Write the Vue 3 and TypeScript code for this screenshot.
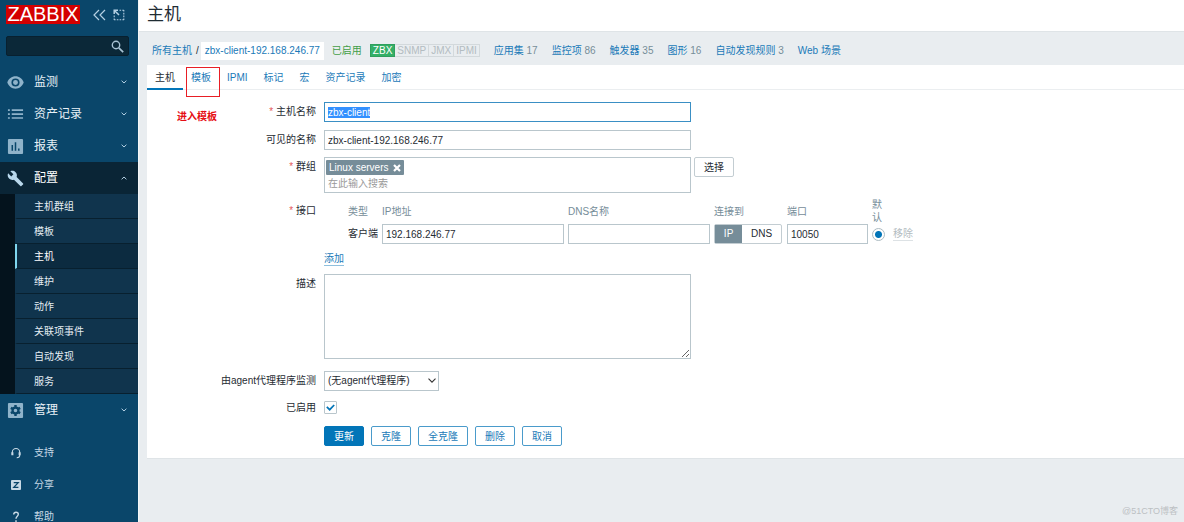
<script setup lang="ts">
import { onMounted, ref } from 'vue'

interface MenuItem {
  label: string
  icon: string
  open?: boolean
}

const topMenu: MenuItem[] = [
  { label: '监测', icon: 'eye' },
  { label: '资产记录', icon: 'list' },
  { label: '报表', icon: 'chart' },
  { label: '配置', icon: 'wrench', open: true },
  { label: '管理', icon: 'gear' },
]
const subMenu: string[] = ['主机群组', '模板', '主机', '维护', '动作', '关联项事件', '自动发现', '服务']
const footerMenu: MenuItem[] = [
  { label: '支持', icon: 'support' },
  { label: '分享', icon: 'share' },
  { label: '帮助', icon: 'help' },
]
const counters: { label: string; count?: number }[] = [
  { label: '应用集', count: 17 },
  { label: '监控项', count: 86 },
  { label: '触发器', count: 35 },
  { label: '图形', count: 16 },
  { label: '自动发现规则', count: 3 },
  { label: 'Web 场景' },
]
const tabs: string[] = ['主机', '模板', 'IPMI', '标记', '宏', '资产记录', '加密']
const actions: string[] = ['克隆', '全克隆', '删除', '取消']

const hostName = ref('zbx-client')
const visibleName = ref('zbx-client-192.168.246.77')
const groupSearch = ref('')
const ip = ref('192.168.246.77')
const dns = ref('')
const port = ref('10050')
const connectTo = ref('ip')
const isDefault = ref('1')
const description = ref('')
const enabled = ref(true)
const hostInput = ref<HTMLInputElement | null>(null)

onMounted(() => {
  hostInput.value?.focus()
  hostInput.value?.select()
})
</script>

<template>
  <div class="page">
    <aside class="sidebar">
      <div class="brand">
        <a class="logo" href="#">ZABBIX</a>
        <button class="icon-button" type="button" aria-label="收起">
          <svg width="13" height="12" viewBox="0 0 13 12" fill="none" stroke="#b4d0e3" stroke-width="1.2">
            <path d="M6 1 1 6l5 5M12 1 7 6l5 5" />
          </svg>
        </button>
        <button class="icon-button" type="button" aria-label="隐藏">
          <svg width="12" height="12" viewBox="0 0 12 12" fill="none" stroke="#b4d0e3" stroke-width="1.1">
            <path d="M6.5 1.2H11M10.8 1v10M11 10.8H1M1.2 11V6.5" stroke-dasharray="1.6 1.2" />
            <path d="M1.200 5V1.200H5M1.200 1.200l4.800 4.800" stroke-width="1.500" />
          </svg>
        </button>
      </div>
      <form class="search" @submit.prevent>
        <input type="text" aria-label="搜索" />
        <button class="icon-button" type="submit" aria-label="搜索">
          <svg width="13" height="13" viewBox="0 0 13 13" fill="none" stroke="#a9c3d4">
            <circle cx="5" cy="5" r="3.7" stroke-width="1.4" />
            <path d="m7.8 7.8 4.4 4.4" stroke-width="1.7" />
          </svg>
        </button>
      </form>

      <nav class="menu">
        <template v-for="item in topMenu" :key="item.label">
          <a class="menu-item" :class="{ open: item.open }" href="#">
            <svg v-if="item.icon === 'eye'" class="menu-icon" viewBox="0 0 18 18">
              <path fill="currentColor" fill-rule="evenodd" d="M9 2.5C5 2.5 1.8 5 .3 9 1.8 13 5 15.500 9 15.500S16.200 13 17.700 9C16.200 5 13 2.500 9 2.500zM9 4.700a4.300 4.300 0 1 1 0 8.600 4.300 4.300 0 0 1 0-8.600z" />
              <circle cx="9" cy="9" r="2.600" fill="currentColor" />
            </svg>
            <svg v-else-if="item.icon === 'list'" class="menu-icon" viewBox="0 0 18 18" fill="currentColor">
              <path d="M1 3.500h2v1.700H1zM5 3.500h12v1.700H5zM1 7.700h2v1.700H1zM5 7.700h12v1.700H5zM1 11.900h2v1.700H1zM5 11.900h12v1.700H5z" />
            </svg>
            <svg v-else-if="item.icon === 'chart'" class="menu-icon" viewBox="0 0 18 18">
              <rect x="1" y="1" width="16" height="16" rx="1" fill="currentColor" />
              <path d="M4.800 7.500h1.600v6H4.800zM8.200 4.500h1.600v9H8.200zM11.700 11.200h1.600v2.300h-1.600z" fill="#0a466a" />
            </svg>
            <svg v-else-if="item.icon === 'wrench'" class="menu-icon" viewBox="0 0 24 24" fill="currentColor">
              <path d="m22.700 19-9.100-9.100c.9-2.300.4-5-1.500-6.900-2-2-5-2.400-7.400-1.300L9 6 6 9 1.600 4.700C.4 7.100.9 10.100 2.900 12.100c1.900 1.900 4.600 2.400 6.900 1.500l9.100 9.100c.4.4 1 .4 1.400 0l2.300-2.300c.5-.4.5-1.100.1-1.400z" />
            </svg>
            <svg v-else class="menu-icon" viewBox="0 0 18 18">
              <rect x="1" y="1" width="16" height="16" rx="1" fill="currentColor" />
              <circle cx="9" cy="9" r="3.100" fill="none" stroke="#0a466a" stroke-width="2.400" />
              <g stroke="#0a466a" stroke-width="2.600">
                <path d="M9 3.300v2M9 12.700v2M4.100 6.200l1.700 1M12.200 10.800l1.700 1M4.100 11.800l1.700-1M12.200 7.200l1.700-1" />
              </g>
            </svg>
            <span>{{ item.label }}</span>
            <svg class="chevron" width="6" height="4" viewBox="0 0 6 4" fill="none" stroke="#b4d0e3">
              <path :d="item.open ? 'M.6 3.300 3 1l2.400 2.300' : 'M.6.700 3 3 5.400.700'" />
            </svg>
          </a>
          <ul v-if="item.open" class="submenu">
            <li v-for="(sub, i) in subMenu" :key="sub">
              <a href="#" :class="{ selected: i === 2 }">{{ sub }}</a>
            </li>
          </ul>
        </template>
      </nav>

      <nav class="footer-menu">
        <a v-for="item in footerMenu" :key="item.label" href="#">
          <svg v-if="item.icon === 'support'" width="12" height="12" viewBox="0 0 12 12" fill="none" stroke="currentColor">
            <path d="M2.300 7.800V5.200a3.700 3.700 0 0 1 7.400 0v3c0 1.600-1 2.500-3 2.500" stroke-width="1.100" />
            <path d="M2.400 5.200v3M9.600 5.200v3" stroke-width="2" />
          </svg>
          <svg v-else-if="item.icon === 'share'" width="12" height="12" viewBox="0 0 12 12">
            <rect x="1" y="1" width="10" height="10" rx="1" fill="currentColor" />
            <path d="M3.700 3.600h4.500L3.800 8.400h4.600" fill="none" stroke="#0a466a" stroke-width="1.300" />
          </svg>
          <svg v-else width="12" height="12" viewBox="0 0 12 12" fill="none" stroke="currentColor" stroke-width="1.400">
            <path d="M3.700 3.600C3.700 2 4.600 1.200 6 1.200s2.300.8 2.300 2.100C8.300 5.200 6 5.200 6 7.700M6 9.300v1.600" />
          </svg>
          <span>{{ item.label }}</span>
        </a>
      </nav>
    </aside>

    <div class="main">
      <header class="title-bar"><h1>主机</h1></header>

      <nav class="crumbs">
        <a href="#">所有主机</a>
        <span class="slash">/</span>
        <a class="current" href="#">zbx-client-192.168.246.77</a>
        <span class="status">已启用</span>
        <span class="badges">
          <span class="badge on">ZBX</span><span class="badge">SNMP</span><span class="badge">JMX</span><span class="badge">IPMI</span>
        </span>
        <span v-for="c in counters" :key="c.label" class="counter">
          <a href="#">{{ c.label }}</a><template v-if="c.count">&nbsp;{{ c.count }}</template>
        </span>
      </nav>

      <main class="card">
        <nav class="tabs">
          <a v-for="(tab, i) in tabs" :key="tab" href="#" :class="{ active: i === 0, marked: i === 1 }">{{ tab }}</a>
        </nav>
        <strong class="note">进入模板</strong>

        <form class="form" @submit.prevent>
          <div class="row">
            <label class="label required" for="host">主机名称</label>
            <input id="host" ref="hostInput" v-model="hostName" class="field wide" type="text" />
          </div>
          <div class="row">
            <label class="label" for="visible">可见的名称</label>
            <input id="visible" v-model="visibleName" class="field wide" type="text" />
          </div>
          <div class="row groups">
            <label class="label required" for="groups">群组</label>
            <div class="multiselect wide">
              <span class="chip">
                Linux servers
                <button type="button" aria-label="移除 Linux servers">
                  <svg width="8" height="8" viewBox="0 0 8 8" stroke="#fff" stroke-width="2.200">
                    <path d="m1 1 6 6M7 1 1 7" />
                  </svg>
                </button>
              </span>
              <input id="groups" v-model="groupSearch" type="text" placeholder="在此输入搜索" />
            </div>
            <button class="button plain" type="button">选择</button>
          </div>
          <div class="row interfaces">
            <span class="label required">接口</span>
            <div>
              <table>
                <colgroup>
                  <col class="c-type" /><col class="c-ip" /><col class="c-dns" /><col class="c-connect" />
                  <col class="c-port" /><col class="c-default" /><col class="c-remove" />
                </colgroup>
                <thead>
                  <tr>
                    <th>类型</th>
                    <th>IP地址</th>
                    <th>DNS名称</th>
                    <th>连接到</th>
                    <th>端口</th>
                    <th>默认</th>
                    <th></th>
                  </tr>
                </thead>
                <tbody>
                  <tr>
                    <td>客户端</td>
                    <td><input v-model="ip" class="field" type="text" aria-label="IP地址" /></td>
                    <td><input v-model="dns" class="field" type="text" aria-label="DNS名称" /></td>
                    <td>
                      <div class="segmented" role="radiogroup" aria-label="连接到">
                        <label><input v-model="connectTo" type="radio" name="connect" value="ip" /><span>IP</span></label>
                        <label><input v-model="connectTo" type="radio" name="connect" value="dns" /><span>DNS</span></label>
                      </div>
                    </td>
                    <td><input v-model="port" class="field" type="text" aria-label="端口" /></td>
                    <td><input v-model="isDefault" class="radio" type="radio" name="default" value="1" aria-label="默认" /></td>
                    <td><button class="link-button" type="button" disabled>移除</button></td>
                  </tr>
                </tbody>
              </table>
              <button class="link-button add" type="button">添加</button>
            </div>
          </div>
          <div class="row">
            <label class="label" for="description">描述</label>
            <textarea id="description" v-model="description" class="wide"></textarea>
          </div>
          <div class="row proxy">
            <label class="label" for="proxy">由agent代理程序监测</label>
            <div class="select">
              <select id="proxy">
                <option>(无agent代理程序)</option>
              </select>
              <svg width="8" height="5" viewBox="0 0 8 5" fill="none" stroke="#333" stroke-width="1.100">
                <path d="m.5.600 3.500 3.500L7.500.600" />
              </svg>
            </div>
          </div>
          <div class="row enabled">
            <label class="label" for="enabled">已启用</label>
            <span class="check">
              <input id="enabled" v-model="enabled" type="checkbox" />
              <svg v-if="enabled" width="9" height="7" viewBox="0 0 9 7" fill="none" stroke="#0275b8" stroke-width="1.700">
                <path d="m.8 2.800 2.900 2.900L8.200 1" />
              </svg>
            </span>
          </div>
          <div class="row buttons">
            <span class="label"></span>
            <button class="button primary" type="submit">更新</button>
            <button v-for="a in actions" :key="a" class="button" type="button">{{ a }}</button>
          </div>
        </form>
      </main>
      <div class="watermark">@51CTO博客</div>
    </div>
  </div>
</template>

<style>
body {
  margin: 0;
  overflow: hidden;
  background: #e9edf0;
}
</style>

<style scoped>
* {
  box-sizing: border-box;
}
.page {
  display: flex;
  height: 100vh;
  font: 10px/14px "Liberation Sans", "Noto Sans CJK SC", sans-serif;
  color: #1f2c33;
}
a {
  color: #1a7ab8;
  text-decoration: none;
}
button,
input,
select,
textarea {
  font: inherit;
  color: inherit;
  margin: 0;
}

/* Sidebar */
.sidebar {
  flex: 0 0 138px;
  overflow: hidden;
  background: #0a466a;
}
.brand {
  display: flex;
  align-items: center;
  gap: 8px;
  padding: 5px 0 0 6px;
}
.logo {
  width: 74px;
  margin-right: 5px;
  background: #d40000;
  color: #fff;
  font-size: 20px;
  line-height: 19px;
  text-align: center;
}
.brand .icon-button {
  margin-right: -1px;
}
.icon-button {
  display: flex;
  padding: 0;
  border: 0;
  background: none;
}
.search {
  display: flex;
  align-items: center;
  height: 20px;
  margin: 12px 9px 10px 6px;
  padding-right: 4px;
  border: 1px solid #08202f;
  border-radius: 2px;
  background: #0b2838;
}
.search input {
  flex: 1;
  min-width: 0;
  border: 0;
  background: none;
  color: #fff;
  outline: none;
}
.menu-item {
  display: flex;
  align-items: center;
  height: 32px;
  padding: 0 11px 0 7px;
  font-size: 12px;
  color: #e8f1f7;
}
.menu-item.open {
  background: #0a2536;
  color: #fff;
}
.menu-icon {
  width: 17px;
  height: 17px;
  margin-right: 10px;
  color: #8fb3ca;
}
.open .menu-icon {
  color: #b9d8ec;
}
.chevron {
  margin-left: auto;
}
.submenu {
  margin: 0;
  padding: 0 0 0 15px;
  list-style: none;
  background: #04131d;
}
.submenu a {
  display: block;
  height: 25px;
  padding-left: 17px;
  border-left: 2px solid #10344d;
  border-bottom: 1px solid #08202f;
  background: #10344d;
  color: #e4edf3;
  line-height: 26px;
}
.submenu a.selected {
  border-left-color: #7fd6ee;
  background: #0c2b40;
  color: #fff;
}
.footer-menu {
  margin-top: 11px;
}
.footer-menu a {
  display: flex;
  align-items: center;
  gap: 12px;
  height: 32px;
  padding-left: 10px;
  color: #c8dae6;
}

/* Page head */
.main {
  position: relative;
  flex: 1;
  min-width: 0;
  border-left: 1px solid #f4f6f7;
}
.title-bar {
  height: 32px;
  padding-left: 8px;
  border-bottom: 1px solid #dfe4e7;
  background: #fff;
}
h1 {
  margin: 0;
  font-size: 17px;
  font-weight: 400;
  line-height: 30px;
}
.crumbs {
  display: flex;
  align-items: center;
  height: 33px;
  padding: 4px 0 0 13px;
  white-space: nowrap;
}
.slash {
  margin: 0 2px 0 4px;
}
.current {
  padding: 2px 4px;
  background: #fff;
}
.status {
  margin: 0 8px;
  color: #429e47;
}
.badges {
  display: flex;
  line-height: 11px;
}
.badge {
  padding: 0 2px;
  border: 1px solid #d3d9dc;
  border-left: 0;
  color: #b3bcc1;
}
.badge.on {
  border: 1px solid #2f9f5e;
  background: #34af67;
  color: #fff;
}
.counter {
  margin-left: 14px;
  color: #768d99;
}

/* Card and tabs */
.card {
  position: relative;
  margin-left: 8px;
  padding-bottom: 12px;
  border-bottom: 1px solid #dfe4e7;
  background: #fff;
}
.tabs {
  display: flex;
  height: 25px;
  border-bottom: 1px solid #ebeef0;
}
.tabs a {
  position: relative;
  padding: 0 8px;
  line-height: 26px;
}
.tabs a.active {
  height: 25px;
  border-bottom: 2px solid #0275b8;
  color: #1f2c33;
}
.tabs a.marked::after {
  content: "";
  position: absolute;
  inset: 2px -1px -8px 3px;
  border: 1px solid #e81e25;
}
.note {
  position: absolute;
  top: 45px;
  left: 30px;
  color: #e60f14;
}

/* Form */
.form {
  padding-top: 12px;
}
.row {
  display: flex;
  align-items: flex-start;
  margin-bottom: 8px;
}
.row.groups {
  margin: -1px 0 3px;
}
.label {
  flex: 0 0 169px;
  margin-right: 8px;
  line-height: 20px;
  text-align: right;
}
.required::before {
  content: "* ";
  color: #e45959;
}
.wide {
  width: 367px;
}
.field {
  display: block;
  height: 20px;
  padding: 0 3px;
  border: 1px solid #b9c6cc;
  background: #fff;
  outline: none;
}
.field:focus {
  border-color: #3a8fc4;
}
.field::selection {
  background: #3390ff;
  color: #fff;
}
.multiselect {
  height: 36px;
  margin-right: 3px;
  padding: 2px 1px;
  border: 1px solid #b9c6cc;
}
.chip {
  display: flex;
  align-items: center;
  gap: 5px;
  width: fit-content;
  height: 15px;
  padding: 0 3px;
  border-radius: 1px;
  background: #768d99;
  color: #fff;
}
.chip button {
  display: flex;
  padding: 0;
  border: 0;
  background: none;
}
.multiselect input {
  display: block;
  width: 100%;
  height: 16px;
  padding: 0 2px;
  border: 0;
  background: none;
  outline: none;
}
.multiselect input::placeholder {
  color: #999;
}
.button {
  height: 20px;
  margin-right: 7px;
  padding: 1px 9px 0;
  border: 1px solid #4a9bcb;
  border-radius: 2px;
  background: #fff;
  color: #1a7ab8;
  line-height: 17px;
}
.button.plain {
  border-color: #c3cdd2;
  color: #1f2c33;
}
.button.primary {
  border-color: #0275b8;
  background: #0275b8;
  color: #fff;
}

/* Interface table */
.interfaces .label {
  margin-top: 5px;
}
table {
  width: 565px;
  margin-left: 24px;
  border-collapse: collapse;
  table-layout: fixed;
}
th {
  height: 28px;
  padding: 2px 4px 0 0;
  font-weight: 400;
  line-height: 13px;
  text-align: left;
  color: #768d99;
}
td {
  padding: 0 4px 0 0;
  white-space: nowrap;
}
td:first-child,
td:nth-last-child(-n + 2) {
  padding-right: 0;
}
td .field {
  width: 100%;
}
.c-type {
  width: 34px;
}
.c-ip {
  width: 186px;
}
.c-dns {
  width: 146px;
}
.c-connect {
  width: 73px;
}
.c-port {
  width: 85px;
}
.c-default {
  width: 21px;
}
.c-remove {
  width: 20px;
}
.segmented {
  display: flex;
  width: 68px;
  height: 20px;
  border: 1px solid #c3cdd2;
  border-radius: 2px;
}
.segmented label {
  flex: 1 1 auto;
  text-align: center;
}
.segmented input {
  position: absolute;
  opacity: 0;
}
.segmented span {
  display: block;
  line-height: 18px;
}
.segmented input:checked + span {
  background: #768d99;
  color: #fff;
}
.radio {
  display: block;
  width: 13px;
  height: 13px;
  appearance: none;
  border: 1px solid #acbbc2;
  border-radius: 50%;
  background: radial-gradient(circle, #0275b8 3px, #fff 4px);
}
.link-button {
  padding: 0;
  border: 0;
  border-bottom: 1px solid #8fc0de;
  background: none;
  color: #1a7ab8;
  line-height: 13px;
}
.link-button:disabled {
  border-bottom-color: #dde2e5;
  color: #b3bcc1;
}
.add {
  display: block;
  margin-top: 8px;
}
textarea {
  height: 85px;
  padding: 4px;
  border: 1px solid #b9c6cc;
  outline: none;
  resize: both;
}

/* Proxy, status and actions */
.row.proxy {
  margin: 12px 0 10px;
}
.select {
  position: relative;
}
select {
  display: block;
  width: 115px;
  height: 20px;
  padding: 0 16px 0 3px;
  appearance: none;
  border: 1px solid #b9c6cc;
  border-radius: 0;
  background: #fff;
}
.select svg {
  position: absolute;
  top: 7px;
  right: 3px;
  pointer-events: none;
}
.row.enabled {
  margin-bottom: 12px;
}
.enabled .label {
  line-height: 13px;
}
.check {
  position: relative;
}
.check input {
  display: block;
  width: 13px;
  height: 13px;
  appearance: none;
  border: 1px solid #b9c6cc;
  border-radius: 1px;
  background: #fff;
}
.check svg {
  position: absolute;
  inset: 3px 2px;
  pointer-events: none;
}
.row.buttons {
  margin-bottom: 0;
}
.watermark {
  position: absolute;
  right: 6px;
  bottom: 4px;
  font-size: 9px;
  color: #bcc0c3;
}
</style>
